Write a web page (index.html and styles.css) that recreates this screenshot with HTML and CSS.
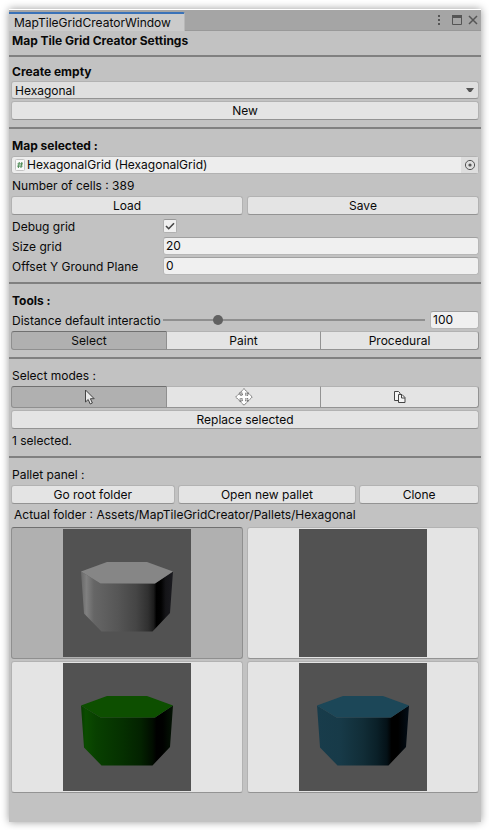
FILE: index.html
```html
<!DOCTYPE html>
<html lang="en">
<head>
<meta charset="utf-8">
<title>MapTileGridCreatorWindow</title>
<link rel="stylesheet" href="styles.css">
</head>
<body>
<main class="window">
  <header class="tabbar">
    <div class="tab">MapTileGridCreatorWindow</div>
    <div class="window-actions">
      <button type="button" aria-label="Menu"><svg width="4" height="12" viewBox="0 0 4 12"><path d="M1 1h2v2H1zM1 5h2v2H1zM1 9h2v2H1z" fill="#555"/></svg></button>
      <button type="button" aria-label="Maximize"><svg width="10" height="10" viewBox="0 0 10 10"><path d="M.5 .5h9v9h-9z" fill="none" stroke="#555"/><path d="M0 0h10v3H0z" fill="#555"/></svg></button>
      <button type="button" aria-label="Close"><svg width="10" height="10" viewBox="0 0 10 10"><path d="M1 1l8 8M9 1L1 9" stroke="#555" stroke-width="1.5"/></svg></button>
    </div>
  </header>

  <section class="section title">
    <h1 class="heading">Map Tile Grid Creator Settings</h1>
  </section>

  <section class="section create">
    <label class="heading" for="shape">Create empty</label>
    <div class="dropdown">
      <select id="shape"><option>Hexagonal</option></select>
      <svg class="arrow" width="8" height="5" viewBox="0 0 8 5"><path d="M0 0h8L5 4H3z" fill="#555"/></svg>
    </div>
    <button type="button" class="btn">New</button>
  </section>

  <section class="section">
    <label class="heading" for="map">Map selected :</label>
    <div class="object-field">
      <svg width="10" height="12" viewBox="0 0 10 12"><rect x=".5" y=".5" width="9" height="11" rx="1" fill="#fafafa" stroke="#c4c4c4"/><path d="M4.3 3L3.3 9M6.9 3L5.9 9M2.5 4.9H8M2.1 7.1H7.6" stroke="#4c8a55" fill="none"/></svg>
      <input id="map" type="text" value="HexagonalGrid (HexagonalGrid)" readonly>
      <button type="button" aria-label="Pick object"><svg width="12" height="12" viewBox="0 0 12 12"><circle cx="6" cy="6" r="4.6" fill="none" stroke="#555"/><circle cx="6" cy="6" r="1.6" fill="#555"/></svg></button>
    </div>
    <p class="text">Number of cells : 389</p>
    <div class="pair">
      <button type="button" class="btn">Load</button>
      <button type="button" class="btn">Save</button>
    </div>
    <div class="field"><label for="debug">Debug grid</label>
      <span class="check"><input id="debug" type="checkbox" checked><svg width="10" height="8" viewBox="0 0 10 8"><path d="M1 4l2.7 2.7L9 1.2" fill="none" stroke="#444" stroke-width="1.6"/></svg></span></div>
    <div class="field"><label for="size">Size grid</label><input id="size" class="input" type="text" value="20"></div>
    <div class="field"><label for="offset">Offset Y Ground Plane</label><input id="offset" class="input" type="text" value="0"></div>
  </section>

  <section class="section">
    <h2 class="heading">Tools :</h2>
    <div class="field slider"><label for="distance">Distance default interactio</label>
      <input id="distance" type="range" min="0" max="500" value="100">
      <input class="input" type="text" value="100" aria-label="Distance value"></div>
    <div class="toolbar">
      <button type="button" aria-pressed="true">Select</button>
      <button type="button">Paint</button>
      <button type="button">Procedural</button>
    </div>
  </section>

  <section class="section">
    <h2 class="heading plain">Select modes :</h2>
    <div class="toolbar tall">
      <button type="button" aria-pressed="true" aria-label="Pointer"><svg width="12" height="16" viewBox="0 0 12 16"><path d="M2.500 1v12l2.700-2.500 2 4.500 2.200-1-2-4.300h3.800z" fill="#e8e8e8" stroke="#444"/></svg></button>
      <button type="button" aria-label="Move"><svg width="18" height="18" viewBox="0 0 18 18"><path d="M9 .7L13.200 5H10.700v2.300H13V4.800L17.300 9 13 13.200V10.700H10.700V13h2.500L9 17.300 4.800 13H7.300V10.700H5v2.500L.7 9 5 4.800v2.500h2.300V5H4.800z" fill="#fff" stroke="#bbb" stroke-width=".8"/><path d="M9 .7L13.200 5H10.700v2.300H13V4.800L17.300 9 13 13.200V10.700H10.700V13h2.500L9 17.300 4.800 13H7.300V10.700H5v2.500L.7 9 5 4.800v2.500h2.300V5H4.800z" fill="none" stroke="#555" stroke-width=".9" stroke-dasharray="1 1"/></svg></button>
      <button type="button" aria-label="Copy"><svg width="12" height="12" viewBox="0 0 12 12"><path d="M4 9.500H.5v-9h4L6 2v2" fill="#f4f4f4" stroke="#444"/><path d="M4.500 3.500H8l3 3v5H4.500z" fill="#f4f4f4" stroke="#444"/><path d="M7.500 3.500v3.500H11" fill="none" stroke="#444"/></svg></button>
    </div>
    <button type="button" class="btn">Replace selected</button>
    <p class="text">1 selected.</p>
  </section>

  <section class="section">
    <h2 class="heading plain">Pallet panel :</h2>
    <div class="actions">
      <button type="button" class="btn">Go root folder</button>
      <button type="button" class="btn">Open new pallet</button>
      <button type="button" class="btn">Clone</button>
    </div>
    <p class="text folder">Actual folder : Assets/MapTileGridCreator/Pallets/Hexagonal</p>
    <div class="tiles">
      <button type="button" class="tile" aria-pressed="true" aria-label="Gray tile"><svg viewBox="0 0 128 128">
        <defs><linearGradient id="gray"><stop offset="0" stop-color="#696969"/><stop offset=".06" stop-color="#808080"/><stop offset=".14" stop-color="#666"/><stop offset=".4" stop-color="#565656"/><stop offset=".6" stop-color="#454545"/><stop offset=".73" stop-color="#303030"/><stop offset=".79" stop-color="#1c1c1c"/><stop offset=".82" stop-color="#000"/><stop offset=".87" stop-color="#020202"/><stop offset=".92" stop-color="#141417"/><stop offset="1" stop-color="#1b1b20"/></linearGradient></defs>
        <path d="M18 42.500L37.500 54.500H92L110 42.500L107 84L89.500 102.500H38.500L21 84.500z" fill="url(#gray)"/>
        <path d="M18 42.500L44 33H84L110 42.500L92 54.500H37.500z" fill="#868686"/></svg></button>
      <button type="button" class="tile" aria-label="Empty tile"><svg viewBox="0 0 128 128"></svg></button>
      <button type="button" class="tile" aria-label="Green tile"><svg viewBox="0 0 128 128">
        <defs><linearGradient id="green"><stop offset="0" stop-color="#083c00"/><stop offset=".05" stop-color="#0b4c00"/><stop offset=".16" stop-color="#084000"/><stop offset=".45" stop-color="#053000"/><stop offset=".65" stop-color="#032200"/><stop offset=".78" stop-color="#010c00"/><stop offset=".82" stop-color="#000"/><stop offset=".89" stop-color="#000100"/><stop offset="1" stop-color="#041404"/></linearGradient></defs>
        <path d="M18 42.500L37.500 54.500H92L110 42.500L107 84L89.500 102.500H38.500L21 84.500z" fill="url(#green)"/>
        <path d="M18 42.500L44 33H84L110 42.500L92 54.500H37.500z" fill="#0d4f00"/></svg></button>
      <button type="button" class="tile" aria-label="Blue tile"><svg viewBox="0 0 128 128">
        <defs><linearGradient id="blue"><stop offset="0" stop-color="#183c4b"/><stop offset=".25" stop-color="#173a48"/><stop offset=".5" stop-color="#112d37"/><stop offset=".65" stop-color="#0a2028"/><stop offset=".76" stop-color="#041117"/><stop offset=".81" stop-color="#000"/><stop offset=".88" stop-color="#000"/><stop offset="1" stop-color="#030e18"/></linearGradient></defs>
        <path d="M18 42.500L37.500 54.500H92L110 42.500L107 84L89.500 102.500H38.500L21 84.500z" fill="url(#blue)"/>
        <path d="M18 42.500L44 33H84L110 42.500L92 54.500H37.500z" fill="#1c4758"/></svg></button>
    </div>
  </section>
</main>
</body>
</html>
```
FILE: styles.css
```css
* { box-sizing: border-box; }

body {
  margin: 0;
  min-height: 100vh;
  padding: 9px 8px 8px 9px;
  display: flex;
  background: #fff;
  color: #090909;
  font: 12px/18px Inter, "Liberation Sans", sans-serif;
}

button, input, select {
  margin: 0;
  padding: 0;
  border: 0;
  min-width: 0;
  background: none;
  color: inherit;
  font: inherit;
}

svg { display: block; flex: none; }
p, h1, h2 { margin: 0; }

.window {
  flex: 1;
  min-width: 0;
  border-top: 1px solid #fff;
  background: #c2c2c2;
  box-shadow: 0 0 8px rgba(0, 0, 0, .4);
}

.tabbar {
  height: 21px;
  display: flex;
  align-items: flex-end;
  justify-content: space-between;
  background: #a5a5a5;
  border-bottom: 1px solid #999;
}

.tab {
  height: 19px;
  margin-bottom: -1px;
  padding: 0 13px 0 5px;
  border-top: 2px solid #3a72b8;
  border-right: 1px solid #b8b8b8;
  border-radius: 0 2px 0 0;
  background: #cbcbcb;
}

.window-actions {
  height: 20px;
  display: flex;
  align-items: center;
  gap: 6px;
  padding-right: 3px;
}

.window-actions button:first-child { margin-right: 5px; }

.section {
  display: flex;
  flex-direction: column;
  gap: 2px;
  padding: 8px 2px 7px 2px;
}

.section + .section { border-top: 2px solid #808080; }
.title { padding-top: 1px; padding-bottom: 6px; }
.create { padding-top: 5px; }

.heading {
  height: 17px;
  padding-left: 1px;
  font-size: 12px;
  font-weight: 700;
}

.create .heading { line-height: 20px; }
.plain { font-weight: 400; }
.text { height: 18px; padding-left: 1px; line-height: 20px; }
.folder { height: 19px; padding-left: 3px; line-height: 18px; }

.btn {
  height: 19px;
  line-height: 17px;
  border: 1px solid #b2b2b2;
  border-bottom-color: #939393;
  border-radius: 3px;
  background: #e4e4e4;
}

.dropdown { position: relative; display: flex; }

.dropdown select {
  flex: 1;
  height: 18px;
  padding-left: 3px;
  appearance: none;
  border: 1px solid #b2b2b2;
  border-bottom-color: #939393;
  border-radius: 3px;
  background: #dfdfdf;
}

.arrow {
  position: absolute;
  right: 5px;
  top: 7px;
  pointer-events: none;
}

.object-field {
  height: 18px;
  display: flex;
  align-items: center;
  gap: 2px;
  padding-left: 3px;
  border: 1px solid #b2b2b2;
  border-radius: 3px;
  background: #ededed;
}

.object-field input { flex: 1; height: 16px; }

.object-field button {
  width: 17px;
  height: 16px;
  display: grid;
  place-items: center;
  background: #dedede;
}

.pair { display: grid; grid-template-columns: 1fr 1fr; gap: 4px; }

.field {
  height: 18px;
  display: grid;
  grid-template-columns: 149px 1fr;
  column-gap: 2px;
  padding-left: 1px;
}

.field label { height: 18px; line-height: 20px; overflow: hidden; white-space: nowrap; }

.input {
  height: 18px;
  padding: 0 2px;
  border: 1px solid #b7b7b7;
  border-top-color: #a0a0a0;
  border-radius: 3px;
  background: #f0f0f0;
}

.check { display: grid; width: 14px; height: 14px; margin-top: 2px; place-items: center; }
.check > * { grid-area: 1 / 1; }

.check input {
  width: 14px;
  height: 14px;
  appearance: none;
  border: 1px solid #b0b0b0;
  border-top-color: #999;
  border-radius: 2px;
  background: #f0f0f0;
}

.check svg { z-index: 1; pointer-events: none; }

.slider { grid-template-columns: 149px 1fr 49px; }

.slider input[type="range"] {
  height: 18px;
  margin-right: 3px;
  appearance: none;
}

input[type="range"]::-webkit-slider-runnable-track { height: 2px; background: #8f8f8f; }

input[type="range"]::-webkit-slider-thumb {
  appearance: none;
  width: 10px;
  height: 10px;
  margin-top: -4px;
  border-radius: 50%;
  background: #616161;
}

.toolbar {
  height: 19px;
  display: grid;
  grid-template-columns: 156fr 154fr 158fr;
}

.tall { height: 22px; }

.toolbar button {
  display: grid;
  place-items: center;
  line-height: 17px;
  border: 1px solid #b2b2b2;
  border-right-color: #939393;
  border-bottom-color: #939393;
  border-left: 0;
  background: #e4e4e4;
}

.toolbar button:first-child { border-left: 1px solid #8f8f8f; border-radius: 3px 0 0 3px; }
.toolbar button:last-child { border-radius: 0 3px 3px 0; }

.toolbar [aria-pressed], .tiles .tile[aria-pressed] {
  background: #b0b0b0;
  border-color: #707070 #8f8f8f #8f8f8f;
}

.actions { display: grid; grid-template-columns: 164fr 179fr 120fr; gap: 3px; }
.tiles { display: grid; grid-template-columns: 1fr 1fr; gap: 2px 4px; }

.tile {
  display: grid;
  justify-content: center;
  padding: 1px;
  border: 1px solid #b2b2b2;
  border-bottom-color: #939393;
  border-radius: 3px;
  background: #e4e4e4;
}

.tile svg { width: 128px; height: 128px; background: #525252; }
```
